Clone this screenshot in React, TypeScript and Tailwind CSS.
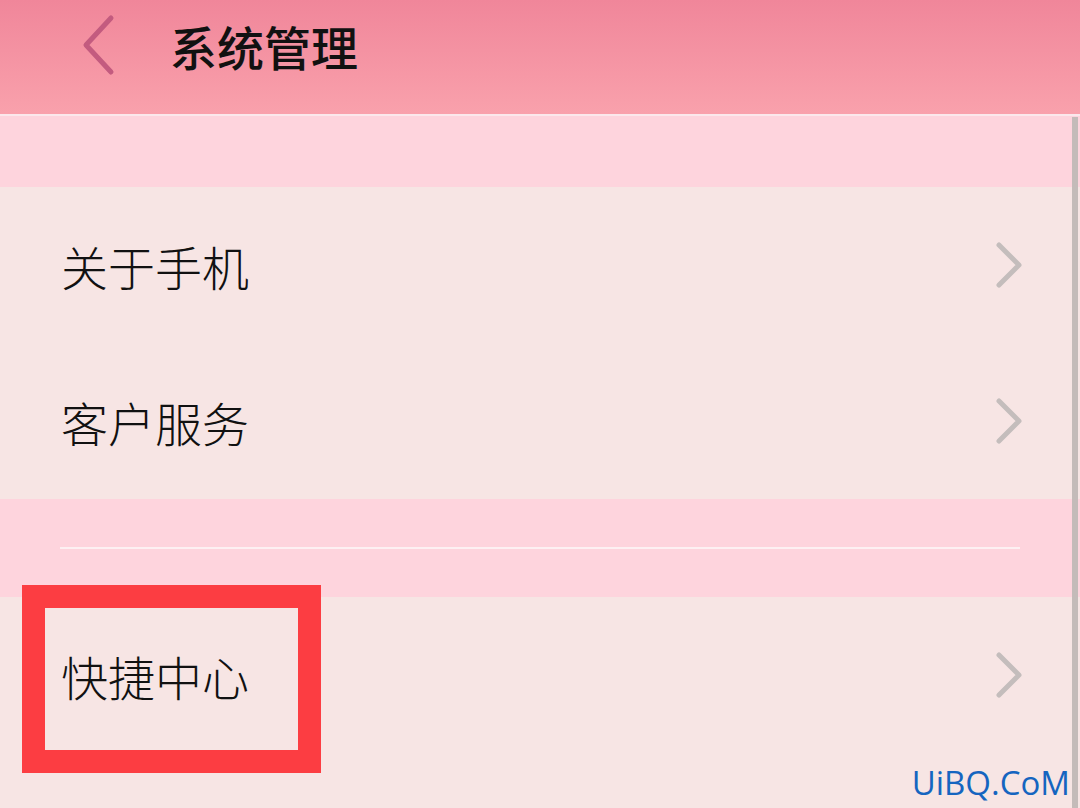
const font = { fontFamily: '"Noto Sans CJK SC", "Noto Sans", sans-serif' };

function Row({ label }: { label: string }) {
  return (
    <div className="flex h-[156px] items-center justify-between pl-[61px] pr-[56px]">
      <span className="text-[47px] font-light leading-none text-[#111]">{label}</span>
      <svg width="30" height="46" viewBox="0 0 30 46" fill="none">
        <path d="M5 3 L25 23 L5 43" stroke="#c4bdbc" strokeWidth="5" strokeLinecap="round" strokeLinejoin="round" />
      </svg>
    </div>
  );
}

export default function App() {
  return (
    <div className="relative h-[808px] w-[1080px] overflow-hidden bg-[#f7e5e4]" style={font}>
      <div className="flex h-[114px] items-center bg-gradient-to-b from-[#f0869a] to-[#f9a1ac] pb-[24px]">
        <svg className="ml-[78px]" width="40" height="64" viewBox="0 0 40 64" fill="none">
          <path d="M33 5 L8 32 L33 59" stroke="#c35b7f" strokeWidth="5" strokeLinecap="round" strokeLinejoin="round" />
        </svg>
        <span className="ml-[52px] text-[47px] font-medium leading-none text-[#111]">系统管理</span>
      </div>
      <div className="h-[2px] bg-[#fbe8ec]" />
      <div className="h-[71px] bg-[#fed4dd]" />
      <Row label="关于手机" />
      <Row label="客户服务" />
      <div className="flex h-[98px] flex-col justify-center bg-[#fed4dd] px-[60px]">
        <div className="h-[2px] bg-[#fdf0f2]" />
      </div>
      <div className="h-[158px]">
        <Row label="快捷中心" />
      </div>

      {/* red highlight frame */}
      <div className="absolute left-[22px] top-[585px] h-[188px] w-[299px] border-[23px] border-[#fc3d42]" />
      {/* scrollbar */}
      <div className="absolute right-[2px] top-[117px] bottom-0 w-[6px] bg-[#c4bbb9]" />
      <div
        className="absolute right-[10px] bottom-[9px] text-[33px] leading-none text-[#1565c0]"
        style={{ fontFamily: '"Open Sans", "Noto Sans", sans-serif' }}
      >
        UiBQ.CoM
      </div>
    </div>
  );
}
